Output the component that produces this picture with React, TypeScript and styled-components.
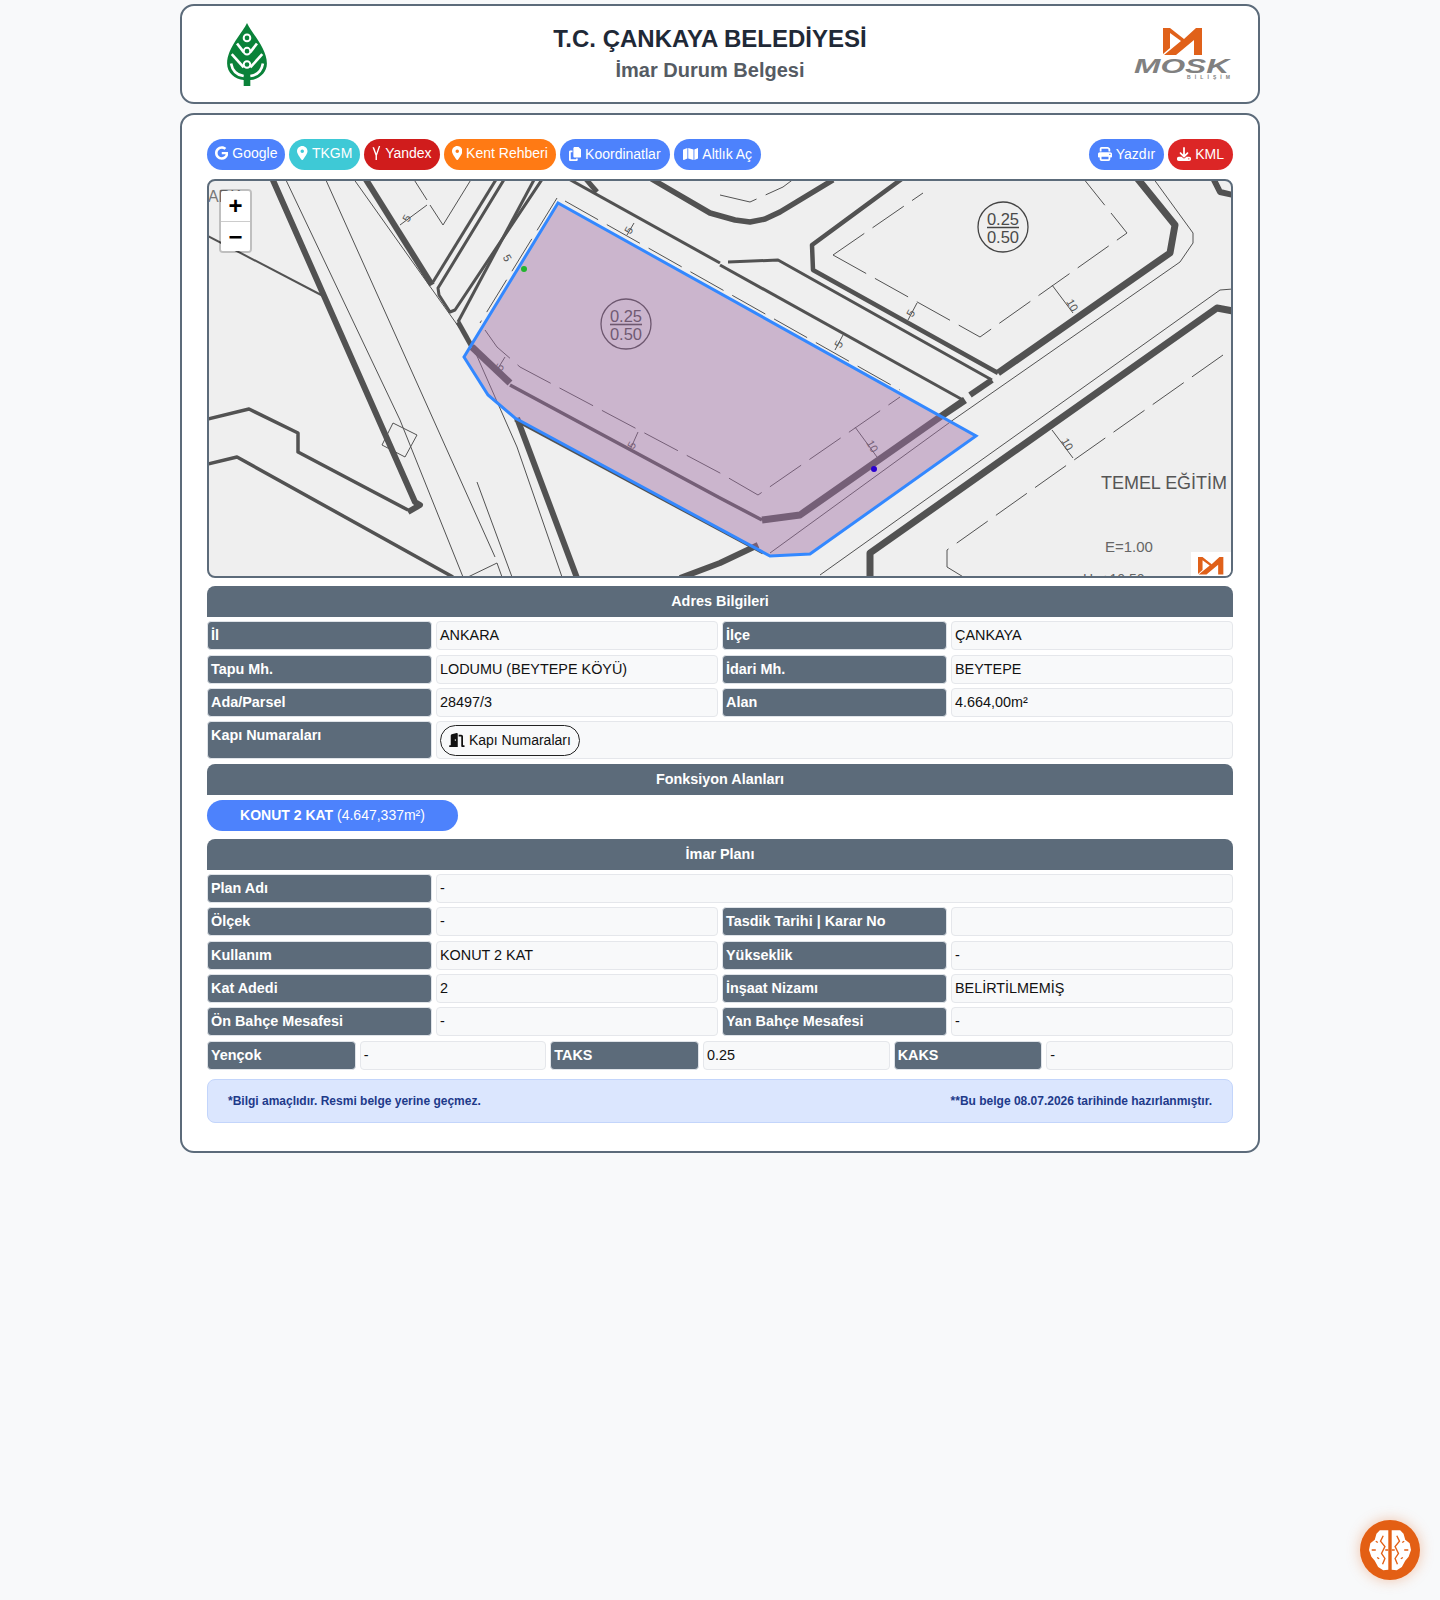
import { ReactNode } from "react";
import styled, { createGlobalStyle } from "styled-components";
import {
  FaCopy,
  FaDoorOpen,
  FaDownload,
  FaGoogle,
  FaLocationDot,
  FaMap,
  FaPrint,
  FaYandexInternational,
} from "react-icons/fa6";

const GlobalStyle = createGlobalStyle`
  html, body {
    margin: 0;
    background: #f8f9fa;
    font-family: "Liberation Sans", Arial, sans-serif;
  }
  * { box-sizing: border-box; }
`;

// plan lines, page coordinates (the map viewBox starts at 207,180)
const thick: [string, number][] = [
  ["272,178 415,502 420,505 408,512", 6],
  ["408,510 298,452 298,433 249,409 208,419", 3.5],
  ["208,464 237,457 453,577", 3.5],
  ["208,236 325,297", 2],
  ["365,178 432,285", 6],
  ["497,178 433,282", 3],
  ["505,178 438,288 439,295 450,312 455,310 543,178", 3],
  ["535,178 458,322", 3],
  ["458,322 472,347", 5],
  ["472,347 510,383", 7],
  ["510,385 720,498 762,520", 3.5],
  ["762,520 800,515 940,417 965,400", 7],
  ["517,418 577,578", 6],
  ["515,420 763,553", 3],
  ["680,578 720,563 758,545", 6],
  ["870,578 870,553 1217,308 1233,311", 7],
  ["650,178 710,213 735,220 750,222 765,219 780,212 833,180", 5.5],
  ["903,178 812,245 813,270 998,373", 4.5],
  ["998,373 1170,253 1175,225 1137,178", 7],
  ["728,262 778,260 992,380", 3],
  ["992,380 970,395", 6],
  ["720,265 963,400", 3],
  ["567,178 720,263", 3],
  ["585,178 597,192", 5],
  ["1213,178 1220,192 1233,195", 6],
];

const thin: string[] = [
  "285,178 400,420 463,577",
  "325,178 495,557",
  "353,178 473,347 517,447 562,577",
  "477,482 512,577",
  "468,577 497,563 502,577",
  "393,423 417,435 405,457 382,445 393,423",
  "1153,178 1193,233 1193,243 1180,262 953,420 770,553",
  "1233,289 1220,290 820,575",
  "430,205 443,225 472,178",
  "400,225 427,205",
  "855,427 877,457",
  "1052,285 1073,313",
  "917,303 908,320",
  "1052,430 1073,458",
  "835,350 843,335",
  "638,432 630,450",
  "505,357 497,370",
  "627,235 634,223",
];

const dashed: string[] = [
  "833,255 980,337 1127,233 1083,178",
  "833,255 923,193",
  "1223,355 1057,472 947,550 947,567 965,578",
  "485,330 497,347 520,367 720,473 758,495 900,397",
  "565,201 900,390",
  "557,198 480,323",
  "413,178 427,200",
  "720,195 750,202 783,187 795,178",
];

const polygon =
  "558,203 464,357 488,395 515,418 770,556 810,554 976,436";

const tickLabels: [string, number, number, number][] = [
  ["5", 410, 220, -60],
  ["5", 504, 260, 60],
  ["5", 632, 232, -60],
  ["5", 503, 369, -60],
  ["5", 635, 447, -60],
  ["5", 842, 346, -60],
  ["5", 914, 315, -60],
  ["10", 869, 448, 60],
  ["10", 1069, 307, 60],
  ["10", 1064, 446, 60],
];

const Page = styled.div`
  width: 1080px;
  margin: 0 auto;
  padding-top: 4px;
  display: flex;
  flex-direction: column;
  gap: 9px;
`;

const Card = styled.div`
  background: #fff;
  border: 2px solid #5c6b7a;
  border-radius: 14px;
`;

const Header = styled(Card)`
  height: 100px;
  padding: 0 25px;
  display: flex;
  align-items: center;
`;

const LeftLogo = styled.div`
  width: 80px;
  display: flex;
  justify-content: center;
`;

const RightLogo = styled.div`
  width: 100px;
  display: flex;
`;

const Titles = styled.div`
  flex: 1;
  text-align: center;
`;

const Title = styled.h1`
  margin: 0;
  font-size: 24px;
  line-height: 30px;
  font-weight: 700;
  color: #1f2937;
`;

const SubTitle = styled.h2`
  margin: 1px 0 0;
  font-size: 20px;
  line-height: 30px;
  font-weight: 700;
  color: #555b63;
`;

const Body = styled(Card)`
  height: 1040px;
  padding: 24px 25px;
`;

const Toolbar = styled.div`
  display: flex;
  gap: 4px;
  margin-bottom: 9px;
`;

const Spacer = styled.div`
  flex: 1;
`;

const ToolButton = styled.a<{ $bg: string; $icon: number; $raised?: boolean }>`
  height: 31px;
  padding: ${(p) => (p.$raised ? "0 8px 3px" : "0 9px 1px")};
  display: flex;
  align-items: center;
  gap: 4px;
  border-radius: 16px;
  background: ${(p) => p.$bg};
  color: #fff;
  font-size: 14px;
  white-space: nowrap;

  svg {
    height: 14px;
    width: ${(p) => p.$icon}px;
  }
`;

const MapFrame = styled.div`
  position: relative;
  height: 399px;
  border: 2px solid #5c6b7a;
  border-radius: 8px;
  overflow: hidden;
  background: #efefef;

  > svg {
    display: block;
    position: absolute;
    left: -2px;
    top: -1px;
  }
`;

const ZoomControl = styled.div`
  position: absolute;
  left: 10px;
  top: 8px;
  width: 33px;
  border: 2px solid rgba(0, 0, 0, 0.2);
  border-radius: 4px;
  background-clip: padding-box;
  overflow: hidden;
`;

const ZoomButton = styled.div`
  height: 30px;
  background: #fff;
  color: #000;
  font-size: 24px;
  font-weight: 700;
  line-height: 29px;
  text-align: center;

  & + & {
    border-top: 1px solid #ccc;
  }
`;

const SectionTitle = styled.div<{ $top: number }>`
  height: 31px;
  margin-top: ${(p) => p.$top}px;
  border-radius: 8px 8px 0 0;
  background: #5c6b7a;
  color: #fff;
  font-size: 14.4px;
  font-weight: 700;
  line-height: 30px;
  text-align: center;
`;

const Row = styled.div<{ $cols: string }>`
  display: grid;
  grid-template-columns: ${(p) => p.$cols};
  gap: 4px;
  margin-top: 4.33px;
`;

const Label = styled.div`
  min-height: 29px;
  padding: 3px 3px 0;
  border: 1px solid #dfe3e8;
  border-radius: 4px;
  background: #5c6b7a;
  color: #fff;
  font-size: 14.4px;
  font-weight: 700;
  line-height: 20px;
`;

const Value = styled.div`
  min-height: 29px;
  padding: 3px 3px 0;
  border: 1px solid #e5e7eb;
  border-radius: 4px;
  background: #f8f9fa;
  color: #111;
  font-size: 14.4px;
  line-height: 20px;
`;

const DoorButton = styled.a`
  width: 140px;
  height: 31px;
  margin-bottom: 2px;
  padding-bottom: 2px;
  display: flex;
  align-items: center;
  justify-content: center;
  gap: 4px;
  border: 1px solid #222;
  border-radius: 16px;
  color: #111;
  font-size: 14px;

  svg {
    height: 14px;
    width: 15.75px;
  }
`;

const FunctionPill = styled.div`
  width: 251px;
  height: 31px;
  margin-top: 5px;
  border-radius: 16px;
  background: #4d82fc;
  color: #fff;
  font-size: 14px;
  line-height: 30px;
  text-align: center;

  b {
    font-weight: 700;
  }
`;

const Note = styled.div`
  height: 44px;
  margin-top: 9px;
  padding: 0 20px;
  display: flex;
  align-items: center;
  justify-content: space-between;
  border: 1px solid #c3d5fb;
  border-radius: 8px;
  background: #dbe6fe;
  color: #1e3a8a;
  font-size: 12px;
  font-weight: 700;
`;

const BrainButton = styled.div`
  position: fixed;
  right: 20px;
  bottom: 20px;
  width: 60px;
  height: 60px;
  display: flex;
  align-items: center;
  justify-content: center;
  border-radius: 50%;
  background: #e35f14;
  box-shadow: 0 0 14px rgba(227, 95, 20, 0.35);
`;

const CantonLogo = () => (
  <svg width="40" height="63" viewBox="0 0 120 190">
    <path
      d="M60 0C48 28 0 75 0 122C0 150 24 170 50 172L50 190L70 190L70 172C96 170 120 150 120 122C120 75 72 28 60 0Z"
      fill="#0a8239"
    />
    <g fill="none" stroke="#fff" strokeWidth="8">
      <path d="M12 122C16 145 30 157 50 160" />
      <path d="M108 122C104 145 90 157 70 160" />
      <path d="M14 94L50 134" />
      <path d="M106 94L70 134" />
      <path d="M30 62L50 88" />
      <path d="M90 62L70 88" />
    </g>
    <g fill="#0a8239" stroke="#fff" strokeWidth="6">
      <circle cx="60" cy="45" r="10" />
      <circle cx="60" cy="85" r="10" />
      <circle cx="60" cy="125" r="10" />
    </g>
  </svg>
);

const MoskMark = () => (
  <path
    d="M0 0L7 0L21 11L33 0L39 0L39 27L31 27L31 12L13 27L1 27L18 13L7 5L7 20L0 26Z"
    fill="#e0611a"
  />
);

const MoskLogo = () => (
  <svg width="100" height="56" viewBox="0 0 100 56">
    <g transform="translate(30 2)">
      <MoskMark />
    </g>
    <text
      x="1"
      y="47"
      fontFamily="Liberation Sans"
      fontWeight="700"
      fontStyle="italic"
      fontSize="21"
      fill="#808080"
      textLength="95"
      lengthAdjust="spacingAndGlyphs"
    >
      MOSK
    </text>
    <text
      x="54"
      y="53"
      fontFamily="Liberation Sans"
      fontWeight="700"
      fontSize="5"
      fill="#808080"
      textLength="43"
    >
      BİLİŞİM
    </text>
  </svg>
);

const BrainHalf = () => (
  <>
    <path
      d="M145 92L120 92L110 102L105 120L92 130L88 150L95 170L105 182L115 200L130 210L145 208Z"
      fill="#fff"
    />
    <path
      d="M130 108L122 124L135 140L125 160L135 175L128 192M96 150L108 150M136 150L145 150M108 124L114 128M112 172L118 176"
      fill="none"
      stroke="#e35f14"
      strokeWidth="4"
    />
  </>
);

const BrainIcon = () => (
  <svg width="42" height="42" viewBox="88 88 124 124">
    <BrainHalf />
    <g transform="translate(300 0) scale(-1 1)">
      <BrainHalf />
    </g>
  </svg>
);

const RatioBadge = ({ x, y }: { x: number; y: number }) => (
  <g>
    <circle cx={x} cy={y} r="25" fill="none" stroke="#444" strokeWidth="1.3" />
    <line x1={x - 16} x2={x + 16} y1={y + 0.5} y2={y + 0.5} stroke="#444" strokeWidth="1.6" />
    <text x={x} y={y - 2} textAnchor="middle" fontSize="16.5" fill="#4a4a4a">0.25</text>
    <text x={x} y={y + 16} textAnchor="middle" fontSize="16.5" fill="#4a4a4a">0.50</text>
  </g>
);

const PlanDrawing = () => (
  <svg
    width="1026"
    height="398"
    viewBox="207 180 1026 398"
    fontFamily="Liberation Sans"
  >
    <g fill="none" stroke="#525252" strokeLinejoin="round">
      {thick.map(([points, width]) => (
        <polyline key={points} points={points} strokeWidth={width} />
      ))}
      {thin.map((points) => (
        <polyline key={points} points={points} strokeWidth={1} />
      ))}
      {dashed.map((points) => (
        <polyline key={points} points={points} strokeWidth={1} strokeDasharray="38 10" />
      ))}
    </g>
    {tickLabels.map(([label, x, y, angle]) => (
      <text
        key={`${x}-${y}`}
        x={x}
        y={y}
        fontSize="11"
        fill="#555"
        textAnchor="middle"
        transform={`rotate(${angle} ${x} ${y})`}
      >
        {label}
      </text>
    ))}
    <RatioBadge x={626} y={324} />
    <RatioBadge x={1003} y={227} />
    <text x="208" y="202" fontSize="16" fill="#777">ARK</text>
    <text x="1101" y="489" fontSize="18" fill="#555" textLength="126">TEMEL EĞİTİM</text>
    <text x="1105" y="552" fontSize="15" fill="#666">E=1.00</text>
    <text x="1083" y="584" fontSize="14" fill="#666">H=+10.50</text>
    <polygon points={polygon} fill="rgb(160,110,165)" fillOpacity="0.45" stroke="#3388ff" strokeWidth="3" strokeLinejoin="miter" />
    <circle cx="524" cy="269" r="3" fill="#22b52e" />
    <circle cx="874" cy="469" r="3" fill="#2a00d0" />
    <rect x="1191" y="552" width="42" height="26" fill="#fff" />
    <g transform="translate(1198 557) scale(0.65 0.65)">
      <MoskMark />
    </g>
  </svg>
);

const Field = ({ label, children }: { label: string; children?: ReactNode }) => (
  <>
    <Label>{label}</Label>
    <Value>{children}</Value>
  </>
);

const TWO = "225fr 282fr 225fr 282fr";
const WIDE = "225px 1fr";
const THREE = "149fr 187fr 149fr 187fr 149fr 187fr";

export default function App() {
  return (
    <>
      <GlobalStyle />
      <Page>
        <Header>
          <LeftLogo>
            <CantonLogo />
          </LeftLogo>
          <Titles>
            <Title>T.C. ÇANKAYA BELEDİYESİ</Title>
            <SubTitle>İmar Durum Belgesi</SubTitle>
          </Titles>
          <RightLogo>
            <MoskLogo />
          </RightLogo>
        </Header>
        <Body>
          <Toolbar>
            <ToolButton $bg="#4d82fc" $icon={13.3} $raised><FaGoogle /> Google</ToolButton>
            <ToolButton $bg="#3ec9d6" $icon={10.5} $raised><FaLocationDot /> TKGM</ToolButton>
            <ToolButton $bg="#d01c1c" $icon={8.75} $raised><FaYandexInternational /> Yandex</ToolButton>
            <ToolButton $bg="#ff7a14" $icon={10.5} $raised><FaLocationDot /> Kent Rehberi</ToolButton>
            <ToolButton $bg="#4d82fc" $icon={12.25}><FaCopy /> Koordinatlar</ToolButton>
            <ToolButton $bg="#4d82fc" $icon={15.75}><FaMap /> Altlık Aç</ToolButton>
            <Spacer />
            <ToolButton $bg="#4d82fc" $icon={14}><FaPrint /> Yazdır</ToolButton>
            <ToolButton $bg="#dc2626" $icon={14}><FaDownload /> KML</ToolButton>
          </Toolbar>
          <MapFrame>
            <PlanDrawing />
            <ZoomControl>
              <ZoomButton>+</ZoomButton>
              <ZoomButton>−</ZoomButton>
            </ZoomControl>
          </MapFrame>

          <SectionTitle $top={8}>Adres Bilgileri</SectionTitle>
          <Row $cols={TWO}>
            <Field label="İl">ANKARA</Field>
            <Field label="İlçe">ÇANKAYA</Field>
          </Row>
          <Row $cols={TWO}>
            <Field label="Tapu Mh.">LODUMU (BEYTEPE KÖYÜ)</Field>
            <Field label="İdari Mh.">BEYTEPE</Field>
          </Row>
          <Row $cols={TWO}>
            <Field label="Ada/Parsel">28497/3</Field>
            <Field label="Alan">4.664,00m²</Field>
          </Row>
          <Row $cols={WIDE}>
            <Field label="Kapı Numaraları">
              <DoorButton><FaDoorOpen /> Kapı Numaraları</DoorButton>
            </Field>
          </Row>

          <SectionTitle $top={5}>Fonksiyon Alanları</SectionTitle>
          <FunctionPill><b>KONUT 2 KAT</b> (4.647,337m²)</FunctionPill>

          <SectionTitle $top={7.4}>İmar Planı</SectionTitle>
          <Row $cols={WIDE}>
            <Field label="Plan Adı">-</Field>
          </Row>
          <Row $cols={TWO}>
            <Field label="Ölçek">-</Field>
            <Field label="Tasdik Tarihi | Karar No" />
          </Row>
          <Row $cols={TWO}>
            <Field label="Kullanım">KONUT 2 KAT</Field>
            <Field label="Yükseklik">-</Field>
          </Row>
          <Row $cols={TWO}>
            <Field label="Kat Adedi">2</Field>
            <Field label="İnşaat Nizamı">BELİRTİLMEMİŞ</Field>
          </Row>
          <Row $cols={TWO}>
            <Field label="Ön Bahçe Mesafesi">-</Field>
            <Field label="Yan Bahçe Mesafesi">-</Field>
          </Row>
          <Row $cols={THREE}>
            <Field label="Yençok">-</Field>
            <Field label="TAKS">0.25</Field>
            <Field label="KAKS">-</Field>
          </Row>

          <Note>
            <span>*Bilgi amaçlıdır. Resmi belge yerine geçmez.</span>
            <span>**Bu belge 08.07.2026 tarihinde hazırlanmıştır.</span>
          </Note>
        </Body>
      </Page>
      <BrainButton>
        <BrainIcon />
      </BrainButton>
    </>
  );
}
